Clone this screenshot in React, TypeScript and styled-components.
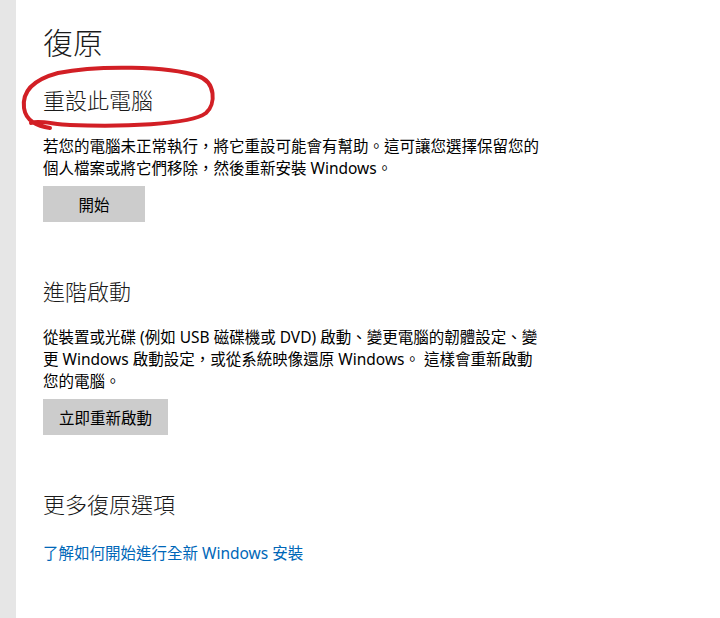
import styled, { createGlobalStyle } from 'styled-components'

const GlobalStyle = createGlobalStyle`
  html,
  body {
    margin: 0;
    padding: 0;
    background: #ffffff;
  }
  body {
    font-family: 'Segoe UI', 'Noto Sans', 'Noto Sans CJK TC', sans-serif;
    color: #000000;
  }
`

const Page = styled.div`
  display: flex;
  height: 618px;
  overflow: hidden;
`

const Rail = styled.div`
  background-color: #e6e6e6;
  flex: 0 0 16px;
`

const Content = styled.main`
  display: flex;
  flex-direction: column;
  align-items: flex-start;
  padding: 23px 0 0 27px;
`

const Title = styled.h1`
  color: #1a1a1a;
  font-size: 30px;
  font-weight: 300;
  line-height: 40px;
  margin: 0;
`

const Heading = styled.h2<{ $gap: number }>`
  color: #1a1a1a;
  font-size: 22px;
  font-weight: 300;
  line-height: 30px;
  margin: ${p => p.$gap}px 0 0 0;
  position: relative;
`

const Text = styled.p`
  font-size: 15.5px;
  line-height: 22px;
  margin: 20px 0 0 0;
`

const Button = styled.button`
  background-color: #cccccc;
  border: none;
  color: #000000;
  font-family: inherit;
  font-size: 15.5px;
  height: 36px;
  margin-top: 7px;
  min-width: 102px;
  padding: 0 16px;
`

const Link = styled.a`
  color: #0067b8;
  font-size: 15.5px;
  line-height: 22px;
  margin-top: 23px;
  text-decoration: none;
`

const Scribble = styled.svg`
  left: -27px;
  pointer-events: none;
  position: absolute;
  top: -25px;
`

function RedCircle() {
  return (
    <Scribble width="214" height="80" viewBox="0 0 214 80">
      <path
        d="M34 68 C22 66 10 62 8 48 C6 32 16 20 42 13 C82 5 152 6 182 16 C200 22 200 44 190 53 C174 65 104 67 54 65 C36 64 22 60 15 63"
        fill="none"
        stroke="#d21f25"
        strokeWidth="4"
        strokeLinecap="round"
        strokeLinejoin="round"
      />
    </Scribble>
  )
}

export default function App() {
  return (
    <>
      <GlobalStyle />
      <Page>
        <Rail />
        <Content>
          <Title>復原</Title>

          <Heading $gap={22}>
            重設此電腦
            <RedCircle />
          </Heading>
          <Text>
            若您的電腦未正常執行，將它重設可能會有幫助。這可讓您選擇保留您的
            <br />
            個人檔案或將它們移除，然後重新安裝 Windows。
          </Text>
          <Button>開始</Button>

          <Heading $gap={54}>進階啟動</Heading>
          <Text>
            從裝置或光碟 (例如 USB 磁碟機或 DVD) 啟動、變更電腦的韌體設定、變
            <br />
            更 Windows 啟動設定，或從系統映像還原 Windows。 這樣會重新啟動
            <br />
            您的電腦。
          </Text>
          <Button>立即重新啟動</Button>

          <Heading $gap={54}>更多復原選項</Heading>
          <Link href="#">了解如何開始進行全新 Windows 安裝</Link>
        </Content>
      </Page>
    </>
  )
}
